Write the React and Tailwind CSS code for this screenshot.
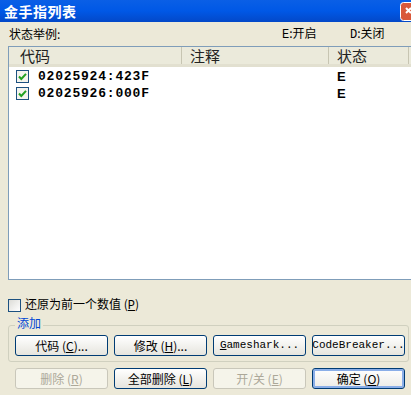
import React from 'react';

const cjk = { fontFamily: '"Noto Sans CJK SC", "Liberation Sans", sans-serif' };
const mono = { fontFamily: '"Liberation Mono", "Noto Sans CJK SC", monospace' };

const CheckMark = () => (
  <svg width="13" height="13" viewBox="0 0 13 13" className="shrink-0">
    <rect x="0.5" y="0.5" width="12" height="12" fill="#f4f4ee" stroke="#1c5180" />
    <path d="M3 6.5 L5.3 9 L10 3.8" fill="none" stroke="#21a121" strokeWidth="2" />
  </svg>
);

const XpButton = ({ children, disabled, primary, font }) => (
  <button
    type="button"
    className={
      'h-[21px] w-[93px] shrink-0 rounded-[3px] border text-[12px] leading-none flex items-center justify-center whitespace-nowrap ' +
      (disabled
        ? 'border-[#c9c7ba] bg-[#f5f4ea] text-[#aca899]'
        : primary
        ? 'border-[#003c74] bg-gradient-to-b from-white to-[#ecebe6] text-black shadow-[inset_0_0_0_2px_#8aaee8]'
        : 'border-[#003c74] bg-gradient-to-b from-white to-[#e6e5de] text-black')
    }
    style={font || cjk}
  >
    {children}
  </button>
);

const rows = [
  { code: '02025924:423F', state: 'E' },
  { code: '02025926:000F', state: 'E' },
];

export default function App() {
  return (
    <div className="w-[411px] h-[395px] overflow-hidden bg-[#ece9d8] flex flex-col" style={cjk}>
      {/* Title bar */}
      <div className="h-[22px] shrink-0 flex items-center justify-between bg-gradient-to-b from-[#0a5fe6] via-[#0058e6] to-[#0348c8]">
        <span className="pl-[4px] text-white font-bold text-[14px] leading-none tracking-[0.5px]">金手指列表</span>
        <svg width="11" height="19" viewBox="0 0 11 19" className="mt-[1px]">
          <path d="M11 0.5 H3.5 Q0.5 0.5 0.5 3.5 V15.5 Q0.5 18.5 3.5 18.5 H11" fill="#d9583a" stroke="#fff" />
          <path d="M6 6 L11 11 M6 11 L11 6" stroke="#fff" strokeWidth="2" />
        </svg>
      </div>

      {/* Legend */}
      <div className="h-[24px] shrink-0 flex items-center text-[12px] text-black">
        <span className="pl-[9px] w-[282px]">状态举例:</span>
        <span className="w-[68px]"><span style={mono}>E</span>:开启</span>
        <span><span style={mono}>D</span>:关闭</span>
      </div>

      {/* List view */}
      <div className="ml-[8px] w-[420px] h-[234px] shrink-0 border border-[#7f9db9] bg-white flex flex-col">
        <div className="h-[20px] shrink-0 flex bg-[#ebeadb] border-b-[3px] border-[#e2e0d0] text-[15px] leading-none text-[#222]">
          <div className="w-[173px] pl-[11px] flex items-center border-r border-[#c7c5b2]">代码</div>
          <div className="w-[147px] pl-[8px] flex items-center border-r border-[#c7c5b2]">注释</div>
          <div className="w-[80px] pl-[8px] flex items-center border-r border-[#c7c5b2]">状态</div>
        </div>
        <div className="flex flex-col pt-[1px]">
          {rows.map((r) => (
            <div key={r.code} className="h-[17px] flex items-center">
              <div className="w-[173px] flex items-center pl-[7px] gap-[9px]">
                <CheckMark />
                <span className="font-bold text-[13px] leading-none tracking-[0.8px] text-black" style={mono}>{r.code}</span>
              </div>
              <div className="w-[147px]" />
              <div className="font-bold text-[13px] leading-none pl-[8px] text-black" style={{ fontFamily: '"Liberation Sans", sans-serif' }}>{r.state}</div>
            </div>
          ))}
        </div>
      </div>

      {/* Restore checkbox */}
      <div className="mt-[18px] ml-[8px] h-[14px] flex items-center gap-[4px] text-[12px] leading-none text-black">
        <div className="w-[13px] h-[13px] border border-[#1c5180] bg-gradient-to-br from-[#dcdcd7] to-white" />
        <span>还原为前一个数值 (<span className="underline" style={mono}>P</span>)</span>
      </div>

      {/* Group box */}
      <div className="relative mt-[13px] ml-[8px] w-[401px] h-[37px] border border-[#d0d0bf] rounded-[3px] flex items-end gap-[6px] pl-[6px] pb-[5px]">
        <span className="absolute -top-[9px] left-[6px] px-[2px] bg-[#ece9d8] text-[12px] leading-none text-[#0046d5]">添加</span>
        <XpButton>代码 (<span className="underline">C</span>)...</XpButton>
        <XpButton>修改 (<span className="underline">H</span>)...</XpButton>
        <XpButton font={{ ...mono, fontSize: '11px' }}><span className="underline">G</span>ameshark...</XpButton>
        <XpButton font={{ ...mono, fontSize: '11px' }}>CodeBreaker...</XpButton>
      </div>

      {/* Bottom buttons */}
      <div className="mt-[6px] ml-[15px] flex gap-[6px]">
        <XpButton disabled>删除 (<span className="underline">R</span>)</XpButton>
        <XpButton>全部删除 (<span className="underline">L</span>)</XpButton>
        <XpButton disabled>开/关 (<span className="underline">E</span>)</XpButton>
        <XpButton primary>确定 (<span className="underline">O</span>)</XpButton>
      </div>
    </div>
  );
}
